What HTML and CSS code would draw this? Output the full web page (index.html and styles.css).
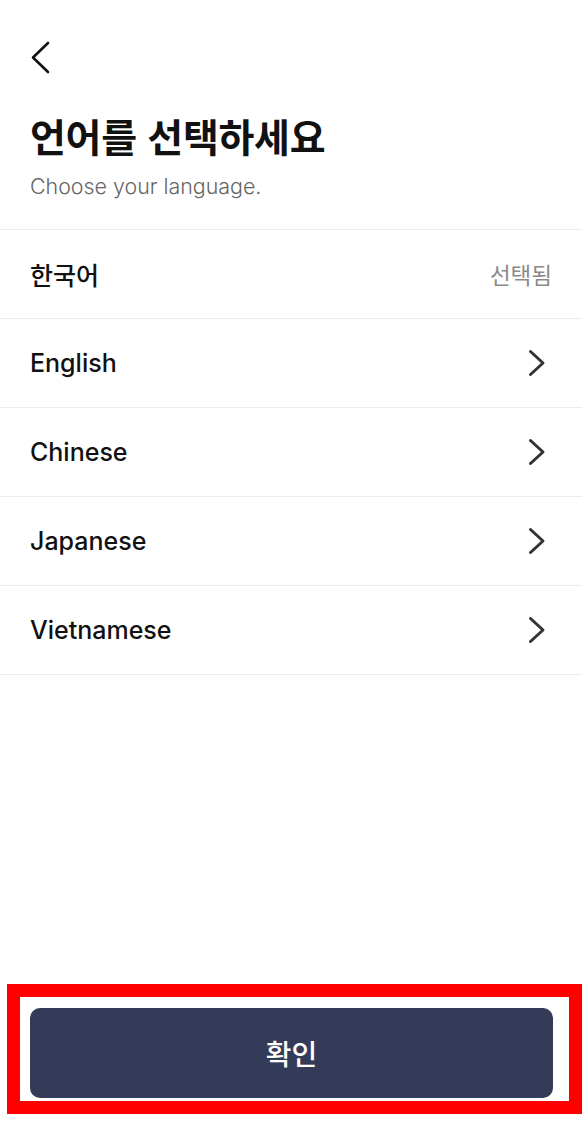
FILE: index.html
```html
<!DOCTYPE html>
<html lang="ko">
<head>
<meta charset="utf-8">
<title>언어 선택</title>
<link rel="stylesheet" href="styles.css">
</head>
<body>
<div class="page">
  <header class="header">
    <button class="back" aria-label="뒤로">
      <svg width="20" height="33" viewBox="0 0 20 33"><path d="M18 2 L3 16.5 L18 31" fill="none" stroke="#111" stroke-width="2.6" stroke-linecap="round" stroke-linejoin="round"/></svg>
    </button>
    <h1 class="title">언어를 선택하세요</h1>
    <p class="subtitle">Choose your language.</p>
  </header>
  <ul class="list">
    <li class="row"><span class="label">한국어</span><span class="selected">선택됨</span></li>
    <li class="row"><span class="label">English</span><svg class="chev" width="24" height="28" viewBox="0 0 24 28"><path d="M8.5 2.5 L21 14 L8.5 25.5" fill="none" stroke="#333" stroke-width="3" stroke-linecap="round" stroke-linejoin="round"/></svg></li>
    <li class="row"><span class="label">Chinese</span><svg class="chev" width="24" height="28" viewBox="0 0 24 28"><path d="M8.5 2.5 L21 14 L8.5 25.5" fill="none" stroke="#333" stroke-width="3" stroke-linecap="round" stroke-linejoin="round"/></svg></li>
    <li class="row"><span class="label">Japanese</span><svg class="chev" width="24" height="28" viewBox="0 0 24 28"><path d="M8.5 2.5 L21 14 L8.5 25.5" fill="none" stroke="#333" stroke-width="3" stroke-linecap="round" stroke-linejoin="round"/></svg></li>
    <li class="row"><span class="label">Vietnamese</span><svg class="chev" width="24" height="28" viewBox="0 0 24 28"><path d="M8.5 2.5 L21 14 L8.5 25.5" fill="none" stroke="#333" stroke-width="3" stroke-linecap="round" stroke-linejoin="round"/></svg></li>
  </ul>
  <footer class="footer">
    <button class="confirm">확인</button>
  </footer>
  <div class="highlight"></div>
</div>
</body>
</html>
```

FILE: styles.css
```css
* { box-sizing: border-box; }
html, body { margin: 0; padding: 0; background: #fff; }
body { font-family: "Inter", "Noto Sans CJK KR", sans-serif; color: #111; }
.page {
  position: relative;
  height: 1125px;
  display: flex;
  flex-direction: column;
  overflow: hidden;
}
.header { padding: 41px 30px 0; }
.back {
  display: block;
  padding: 0;
  margin: 0;
  border: 0;
  background: none;
  height: 33px;
}
.back svg { display: block; }
.title {
  margin: 39px 0 0;
  font-family: "Noto Sans CJK KR", sans-serif;
  font-size: 39px;
  line-height: 44px;
  font-weight: 700;
  letter-spacing: -0.3px;
  color: #111;
}
.subtitle {
  margin: 16px 0 0;
  font-size: 21.4px;
  line-height: 26px;
  font-weight: 300;
  color: #666;
}
.list {
  list-style: none;
  margin: 30px 0 0;
  padding: 0;
  border-top: 1px solid #ececec;
}
.row {
  height: 89px;
  border-bottom: 1px solid #ececec;
  display: flex;
  align-items: center;
  justify-content: space-between;
  padding: 0 30px;
}
.label {
  font-size: 25px;
  font-weight: 500;
  color: #111;
}
.selected {
  font-family: "Noto Sans CJK KR", sans-serif;
  font-size: 22.5px;
  color: #8a8a8a;
}
.chev { display: block; margin-right: 6px; }
.footer {
  margin-top: auto;
  padding: 0 29px 27px 30px;
}
.confirm {
  display: block;
  width: 100%;
  height: 90px;
  border: 0;
  border-radius: 10px;
  background: #333b58;
  color: #fff;
  font-family: "Noto Sans CJK KR", sans-serif;
  font-size: 28px;
  font-weight: 500;
}
.highlight {
  position: absolute;
  left: 7px;
  top: 984px;
  width: 575px;
  height: 130px;
  border: 13px solid #ff0000;
  pointer-events: none;
}
```
